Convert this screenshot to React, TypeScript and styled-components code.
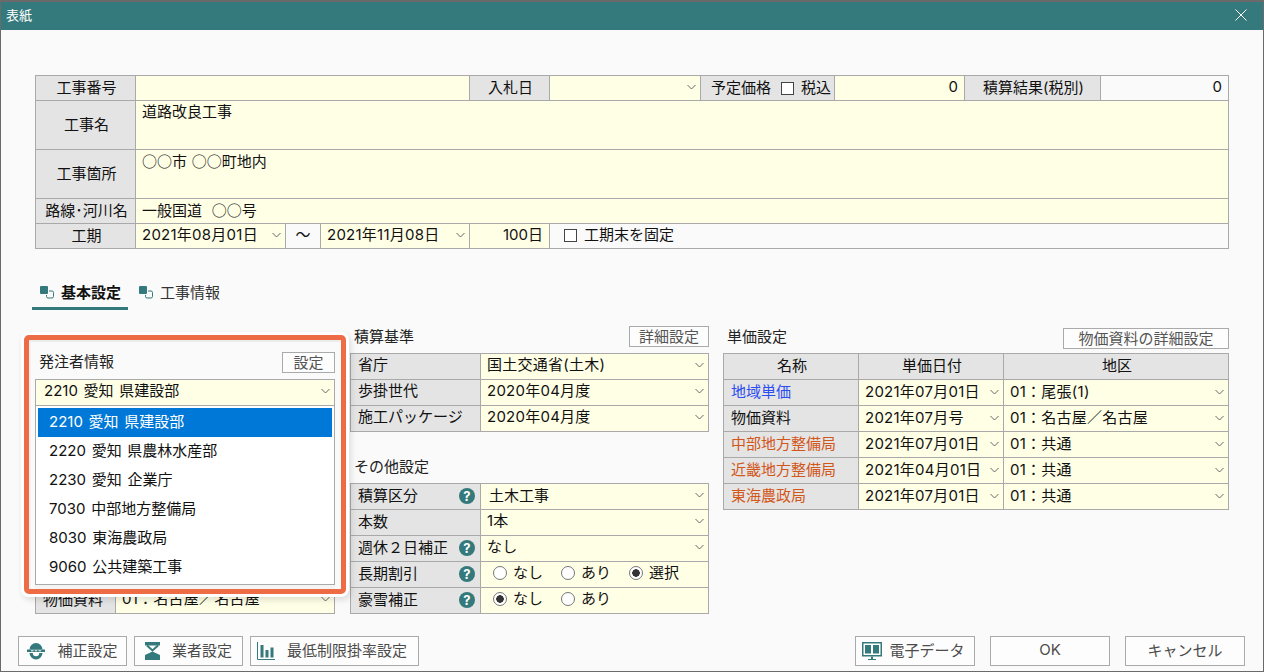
import React from 'react';
import styled, { createGlobalStyle } from 'styled-components';

const TEAL = '#34797b';

const GlobalStyle = createGlobalStyle`
  html, body {
    margin: 0;
    padding: 0;
    background: #fafafa;
    font-family: "Inter", "Noto Sans CJK JP", sans-serif;
    font-size: 15px;
    word-spacing: 1.5px;
    color: #111;
  }
  * { box-sizing: border-box; }
`;

const Window = styled.div`
  width: 1264px;
  height: 672px;
  border: 1px solid #6a6a6a;
  border-top-width: 2px;
  background: #fafafa;
  overflow: hidden;
`;

const TitleBar = styled.div`
  height: 28px;
  margin: 0 -1px;
  padding: 0 17px 3px 6px;
  background: ${TEAL};
  color: #fff;
  font-size: 13px;
  display: flex;
  align-items: center;
  justify-content: space-between;
`;

const Body = styled.div`
  padding: 45px 34px 0 34px;
`;

// lift = how far the text sits above the centre of its row
const Grid = styled.div<{ $cols: string; $rows?: string; $labelLift?: number; $valueLift?: number }>`
  --label-lift: ${p => p.$labelLift ?? 2}px;
  --value-lift: ${p => p.$valueLift ?? 2}px;
  display: grid;
  grid-template-columns: ${p => p.$cols};
  grid-auto-rows: 25px;
  ${p => p.$rows && `grid-template-rows: ${p.$rows};`}
  gap: 1px;
  background: #a9a9a9;
  border: 1px solid #a9a9a9;
`;

const Cell = styled.div<{ $span?: number }>`
  display: flex;
  align-items: center;
  white-space: nowrap;
  min-width: 0;
  line-height: 20px;
  ${p => p.$span && `grid-column: span ${p.$span};`}
`;

const Label = styled(Cell)<{ $center?: boolean; $color?: string }>`
  background: #e4e4e4;
  padding: 0 5px var(--label-lift) 7px;
  justify-content: ${p => (p.$center ? 'center' : 'space-between')};
  ${p => p.$color && `color: ${p.$color};`}
`;

const Value = styled(Cell)<{ $right?: boolean; $top?: boolean; $inset?: number }>`
  background: #ffffe6;
  padding: 0 6px var(--value-lift) ${p => p.$inset ?? 6}px;
  justify-content: ${p => (p.$right ? 'flex-end' : 'space-between')};
  ${p => p.$top && 'align-items: flex-start; padding-top: 1px;'}
`;

const Plain = styled(Cell)<{ $right?: boolean; $center?: boolean }>`
  background: #fafafa;
  padding: 0 6px var(--value-lift);
  justify-content: ${p => (p.$right ? 'flex-end' : p.$center ? 'center' : 'flex-start')};
`;

const NudgedText = styled.span`
  margin: 2px 0 0 2px;
`;

const SelectText = styled.span<{ $tracking: number }>`
  letter-spacing: ${p => p.$tracking}px;
`;

const CjkText = styled.span`
  font-family: "Noto Sans CJK JP", sans-serif;
`;

const CheckBox = styled.span`
  display: inline-block;
  flex: none;
  width: 13px;
  height: 13px;
  margin-right: 7px;
  background: #fff;
  border: 1px solid #444;
`;

const CheckWrap = styled.div<{ $pad: number }>`
  display: flex;
  align-items: center;
  padding-left: ${p => p.$pad}px;
`;

const InlineLabel = styled(Label)`
  justify-content: flex-start;
  padding-left: 10px;
  padding-right: 0;
`;

const TabBar = styled.div`
  display: flex;
  margin: 33px 0 16px -3px;
`;

const Tab = styled.div<{ $active?: boolean }>`
  display: flex;
  align-items: center;
  gap: 7px;
  height: 28px;
  padding: 0 7px 6px 8px;
  margin-right: 3px;
  font-weight: ${p => (p.$active ? 700 : 400)};
  color: ${p => (p.$active ? '#111' : '#333')};
  border-bottom: 3px solid ${p => (p.$active ? TEAL : 'transparent')};
`;

const Panels = styled.div`
  display: flex;
`;

const Panel = styled.section<{ $width: number; $gap?: number }>`
  position: relative;
  flex: none;
  width: ${p => p.$width}px;
  margin-right: ${p => p.$gap ?? 0}px;
`;

const Head = styled.div<{ $height: number; $pad?: number }>`
  height: ${p => p.$height}px;
  padding-top: ${p => p.$pad ?? 0}px;
  display: flex;
  justify-content: space-between;
  align-items: flex-start;
`;

const Title = styled.div<{ $drop: number }>`
  margin: ${p => p.$drop}px 0 0 4px;
  line-height: 20px;
  color: #222;
`;

const SmallButton = styled.div<{ $width: number }>`
  width: ${p => p.$width}px;
  height: 21px;
  padding-bottom: 2px;
  border: 1px solid #aaa;
  background: #fdfdfd;
  color: #555;
  display: flex;
  align-items: center;
  justify-content: center;
`;

const Dropdown = styled.ul`
  position: absolute;
  left: 0;
  top: 79px;
  width: 300px;
  height: 180px;
  margin: 0;
  padding: 2px;
  list-style: none;
  background: #fff;
  border: 1px solid #aaa;
  box-shadow: 0 5px 0 #f4f4f4;
  z-index: 2;
`;

const DropItem = styled.li<{ $selected?: boolean }>`
  height: 29px;
  padding: 0 0 4px 11px;
  display: flex;
  align-items: center;
  background: ${p => (p.$selected ? '#0078d7' : 'transparent')};
  color: ${p => (p.$selected ? '#fff' : '#111')};
`;

const Highlight = styled.div`
  position: absolute;
  left: -11px;
  top: 9px;
  width: 322px;
  height: 259px;
  border: 5px solid #ee6c45;
  border-radius: 5px;
  box-shadow: 0 0 0 3px #fff, 2px 3px 6px 3px rgba(0, 0, 0, 0.12), inset 0 2px 0 #ececec, inset 2px 0 0 #f1f1f1;
  z-index: 3;
  pointer-events: none;
`;

const RadioGroup = styled.div`
  display: flex;
  padding-left: 6px;
`;

const RadioItem = styled.div`
  width: 68px;
  display: flex;
  align-items: center;
  gap: 6px;
`;

const RadioDot = styled.span<{ $on?: boolean }>`
  width: 14px;
  height: 14px;
  flex: none;
  border-radius: 50%;
  border: 1px solid #777;
  background: ${p => (p.$on ? 'radial-gradient(circle, #333 0 3.5px, #fff 4px)' : '#fff')};
`;

const HelpMark = styled.span`
  width: 16px;
  height: 16px;
  flex: none;
  border-radius: 50%;
  background: ${TEAL};
  color: #fff;
  font-size: 13px;
  font-weight: 700;
  line-height: 16px;
  text-align: center;
`;

const Footer = styled.div`
  display: flex;
  justify-content: space-between;
  margin: 22px -16px 0 -17px;
`;

const ButtonGroup = styled.div<{ $gap: number }>`
  display: flex;
  gap: ${p => p.$gap}px;
`;

const FootButton = styled.div<{ $width: number; $gap?: number; $shift?: number }>`
  width: ${p => p.$width}px;
  height: 30px;
  padding: 0 ${p => p.$shift ?? 0}px 4px 0;
  border: 1px solid #aaa;
  background: #fdfdfd;
  color: #4c4c4c;
  display: flex;
  align-items: center;
  justify-content: center;
  gap: ${p => p.$gap ?? 12}px;

  svg {
    margin-bottom: -4px;
  }
`;

const Chevron = () => (
  <svg width="9" height="6" viewBox="0 0 9 6" style={{ flex: 'none', marginRight: -2 }}>
    <path d="M.5 1 4.5 5 8.5 1" fill="none" stroke="#666" strokeWidth="1" />
  </svg>
);

const CloseIcon = () => (
  <svg width="12" height="12" viewBox="0 0 12 12">
    <path d="M.5.5l11 11M11.5.5l-11 11" stroke="#fff" strokeWidth="1" />
  </svg>
);

const TabIcon = () => (
  <svg width="14" height="14" viewBox="0 0 14 14">
    <rect x="0" y="1" width="8" height="8" rx="1" fill={TEAL} />
    <path d="M9 6h3a1.500 1.500 0 0 1 1.500 1.500v4A1.500 1.500 0 0 1 12 13H8a1.500 1.500 0 0 1-1.500-1.500V10" fill="none" stroke={TEAL} strokeWidth="1" />
  </svg>
);

const HelmetIcon = () => (
  <svg width="18" height="18" viewBox="0 0 18 18">
    <path d="M2.500 7.500a6.500 6.500 0 0 1 13 0z" fill={TEAL} />
    <rect x="0" y="7.500" width="18" height="2.500" fill={TEAL} />
    <path d="M4 8.750h2.500M7.800 8.750h2.400M11.500 8.750H14" stroke="#fff" strokeWidth="1" />
    <path d="M2.500 11h3.300a3.200 3.200 0 0 0 6.400 0h3.300a6.500 6.500 0 0 1-13 0z" fill={TEAL} />
  </svg>
);

const HourglassIcon = () => (
  <svg width="15" height="18" viewBox="0 0 15 18">
    <rect x="0" y="0" width="15" height="3.500" fill={TEAL} />
    <path d="M2 3.500 7.500 8.500 13 3.500" fill="none" stroke={TEAL} strokeWidth="2" />
    <path d="M7.500 9.500 15 13v5H0v-5z" fill={TEAL} />
  </svg>
);

const ChartIcon = () => (
  <svg width="18" height="18" viewBox="0 0 18 18">
    <path d="M.5 0v17.500H18" fill="none" stroke={TEAL} strokeWidth="1" />
    <rect x="3.500" y="3" width="3" height="12.500" fill={TEAL} />
    <rect x="8.500" y="8" width="3" height="7.500" fill={TEAL} />
    <rect x="13.500" y="5.500" width="3" height="10" fill={TEAL} />
  </svg>
);

const MonitorIcon = () => (
  <svg width="20" height="18" viewBox="0 0 20 18">
    <rect x="0" y="0" width="20" height="14.500" fill={TEAL} />
    <rect x="1.500" y="1.500" width="17" height="11.500" fill="#fff" />
    <path d="M3 3h6v8.500H3zM11 3h6v8.500h-6z" fill={TEAL} />
    <path d="M9 14.500h2V17h3v1H6v-1h3z" fill={TEAL} />
  </svg>
);

const TOP_COLS = '99px 149px 34px 148px 79px 150px 133px 129px 135px 127px';
const MID_COLS = '129px 227px';

const FormSelect = ({ text, span, inset, tracking = 0.25 }: { text: string; span?: number; inset?: number; tracking?: number }) => (
  <Value $span={span} $inset={inset}>
    <SelectText $tracking={tracking}>{text}</SelectText>
    <Chevron />
  </Value>
);

const PRICE_ROWS = [
  { name: '地域単価', color: '#2b4df0', date: '2021年07月01日', area: '01：尾張(1)' },
  { name: '物価資料', date: '2021年07月号', area: '01：名古屋／名古屋' },
  { name: '中部地方整備局', color: '#d2571b', date: '2021年07月01日', area: '01：共通' },
  { name: '近畿地方整備局', color: '#d2571b', date: '2021年04月01日', area: '01：共通' },
  { name: '東海農政局', color: '#d2571b', date: '2021年07月01日', area: '01：共通' },
];

const ORDERERS = [
  '2210 愛知 県建設部',
  '2220 愛知 県農林水産部',
  '2230 愛知 企業庁',
  '7030 中部地方整備局',
  '8030 東海農政局',
  '9060 公共建築工事',
];

const App: React.FC = () => {
  return (
    <Window>
      <GlobalStyle />
      <TitleBar>
        <span>表紙</span>
        <CloseIcon />
      </TitleBar>
      <Body>
        <Grid $cols={TOP_COLS} $rows="24px 48px 48px 24px 24px" $labelLift={0} $valueLift={2}>
          <Label $center>工事番号</Label>
          <Value $span={3} />
          <Label $center>入札日</Label>
          <FormSelect text="" />
          <InlineLabel>
            予定価格
            <CheckWrap $pad={10}><CheckBox />税込</CheckWrap>
          </InlineLabel>
          <Value $right>0</Value>
          <Label $center>積算結果(税別)</Label>
          <Plain $right>0</Plain>

          <Label $center>工事名</Label>
          <Value $span={9} $top>道路改良工事</Value>

          <Label $center>工事箇所</Label>
          <Value $span={9} $top><CjkText>○○市 ○○町地内</CjkText></Value>

          <Label $center>路線･河川名</Label>
          <Value $span={9}><CjkText>一般国道&nbsp;&nbsp;○○号</CjkText></Value>

          <Label $center>工期</Label>
          <FormSelect text="2021年08月01日" />
          <Plain $center>～</Plain>
          <FormSelect text="2021年11月08日" />
          <Value $right>100日</Value>
          <Plain $span={5}>
            <CheckWrap $pad={8}><CheckBox />工期末を固定</CheckWrap>
          </Plain>
        </Grid>

        <TabBar>
          <Tab $active><TabIcon />基本設定</Tab>
          <Tab><TabIcon />工事情報</Tab>
        </TabBar>

        <Panels>
          <Panel $width={300} $gap={15}>
            <Highlight />
            <Head $height={53} $pad={26}>
              <Title $drop={0}>発注者情報</Title>
              <SmallButton $width={53}>設定</SmallButton>
            </Head>
            <Grid $cols="79px 218px" $valueLift={4}>
              <FormSelect text="2210 愛知 県建設部" span={2} inset={8} tracking={0} />
              {Array.from({ length: 7 }).map((_, i) => (
                <React.Fragment key={i}>
                  <Label />
                  <Value />
                </React.Fragment>
              ))}
              <Label>物価資料</Label>
              <FormSelect text="01：名古屋／名古屋" />
            </Grid>
            <Dropdown>
              {ORDERERS.map((name, i) => (
                <DropItem key={name} $selected={i === 0}>{name}</DropItem>
              ))}
            </Dropdown>
          </Panel>

          <Panel $width={359} $gap={14}>
            <Head $height={27}>
              <Title $drop={1}>積算基準</Title>
              <SmallButton $width={80}>詳細設定</SmallButton>
            </Head>
            <Grid $cols={MID_COLS} $labelLift={4} $valueLift={4}>
              <Label>省庁</Label>
              <FormSelect text="国土交通省(土木)" />
              <Label>歩掛世代</Label>
              <FormSelect text="2020年04月度" />
              <Label>施工パッケージ</Label>
              <FormSelect text="2020年04月度" />
            </Grid>
            <Head $height={51}>
              <Title $drop={25}>その他設定</Title>
            </Head>
            <Grid $cols={MID_COLS} $valueLift={3}>
              <Label>積算区分<HelpMark>?</HelpMark></Label>
              <Value><NudgedText>土木工事</NudgedText><Chevron /></Value>
              <Label>本数</Label>
              <FormSelect text="1本" />
              <Label>週休２日補正<HelpMark>?</HelpMark></Label>
              <FormSelect text="なし" />
              <Label>長期割引<HelpMark>?</HelpMark></Label>
              <Value>
                <RadioGroup>
                  <RadioItem><RadioDot />なし</RadioItem>
                  <RadioItem><RadioDot />あり</RadioItem>
                  <RadioItem><RadioDot $on />選択</RadioItem>
                </RadioGroup>
              </Value>
              <Label>豪雪補正<HelpMark>?</HelpMark></Label>
              <Value>
                <RadioGroup>
                  <RadioItem><RadioDot $on />なし</RadioItem>
                  <RadioItem><RadioDot />あり</RadioItem>
                </RadioGroup>
              </Value>
            </Grid>
          </Panel>

          <Panel $width={506}>
            <Head $height={27} $pad={2}>
              <Title $drop={-1}>単価設定</Title>
              <SmallButton $width={166}>物価資料の詳細設定</SmallButton>
            </Head>
            <Grid $cols="134px 144px 224px">
              <Label $center>名称</Label>
              <Label $center>単価日付</Label>
              <Label $center>地区</Label>
              {PRICE_ROWS.map(row => (
                <React.Fragment key={row.name}>
                  <Label $color={row.color}>{row.name}</Label>
                  <FormSelect text={row.date} />
                  <FormSelect text={row.area} />
                </React.Fragment>
              ))}
            </Grid>
          </Panel>
        </Panels>

        <Footer>
          <ButtonGroup $gap={7}>
            <FootButton $width={109}><HelmetIcon />補正設定</FootButton>
            <FootButton $width={109}><HourglassIcon />業者設定</FootButton>
            <FootButton $width={169} $shift={5}><ChartIcon />最低制限掛率設定</FootButton>
          </ButtonGroup>
          <ButtonGroup $gap={15}>
            <FootButton $width={120} $gap={7} $shift={3}><MonitorIcon />電子データ</FootButton>
            <FootButton $width={120}>OK</FootButton>
            <FootButton $width={120}>キャンセル</FootButton>
          </ButtonGroup>
        </Footer>
      </Body>
    </Window>
  );
};

export default App;
